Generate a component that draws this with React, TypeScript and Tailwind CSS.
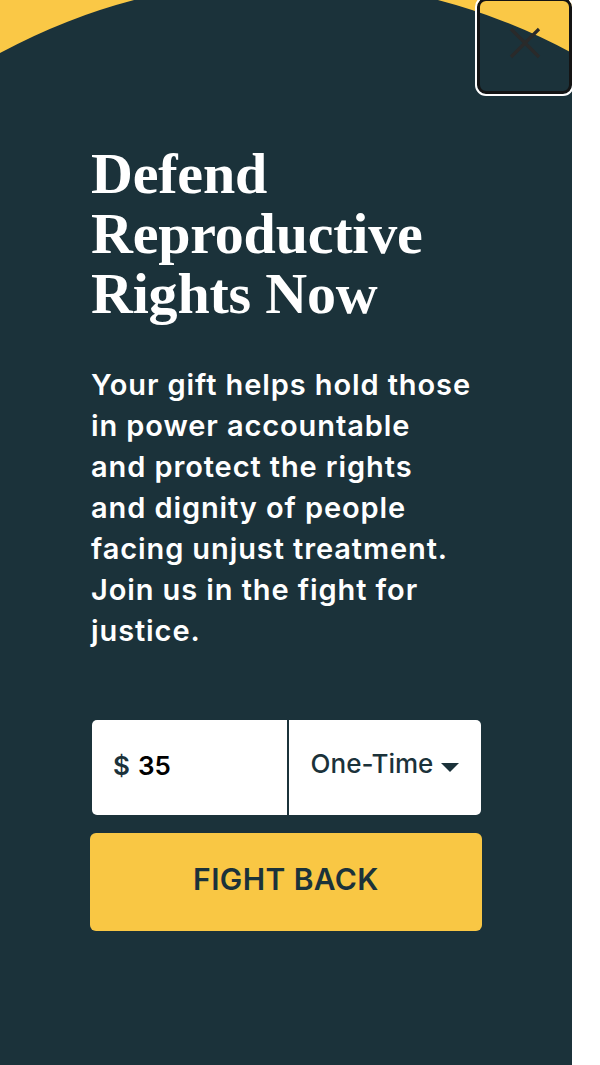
import React from "react";

const bodyLines = [
  "Your gift helps hold those",
  "in power accountable",
  "and protect the rights",
  "and dignity of people",
  "facing unjust treatment.",
  "Join us in the fight for",
  "justice.",
];

export default function App() {
  return (
    <div className="flex min-h-[1065px] w-[600px] bg-white">
      <div className="relative w-[572px] min-h-[1065px] overflow-hidden bg-[#1b323a]">
        <svg
          className="absolute left-0 top-0"
          width="572"
          height="60"
          viewBox="0 0 572 60"
          aria-hidden="true"
        >
          <path d="M0 0 H572 V53 A600 600 0 0 0 0 53 Z" fill="#fac846" />
        </svg>

        <button
          className="absolute right-0 top-[-2px] flex h-[96px] w-[95px] items-center justify-center rounded-[9px] border-[3px] border-[#141414] outline outline-2 outline-white"
          aria-label="Close"
        >
          <svg width="32" height="32" viewBox="0 0 32 32" className="mt-[-6px]">
            <path d="M2 2 L30 30 M30 2 L2 30" stroke="#2a2a2a" strokeWidth="3.2" />
          </svg>
        </button>

        <div className="relative flex flex-col pl-[91px] pt-[144px] w-[484px]">
          <h1
            className="text-[58px] leading-[60px] font-bold text-white tracking-[-0.2px]"
            style={{ fontFamily: '"Liberation Serif", "DejaVu Serif", serif' }}
          >
            Defend
            <br />
            Reproductive
            <br />
            Rights Now
          </h1>

          <p
            className="mt-[40px] text-[29px] leading-[41px] font-semibold text-white tracking-[0.9px] whitespace-nowrap"
            style={{ fontFamily: 'Inter, "Noto Sans", sans-serif' }}
          >
            {bodyLines.map((l, i) => (
              <React.Fragment key={i}>
                {l}
                {i < bodyLines.length - 1 && <br />}
              </React.Fragment>
            ))}
          </p>

          <div
            className="mt-[69px] flex h-[95px] w-[389px] ml-[1px]"
            style={{ fontFamily: 'Inter, "Noto Sans", sans-serif' }}
          >
            <div className="flex w-[195px] items-center gap-[8px] rounded-l-[5px] bg-white pb-[4px] pl-[21px] text-[26px] font-semibold">
              <span className="text-[#1b323a]">$</span>
              <span className="text-black">35</span>
            </div>
            <div className="w-[2px] bg-[#1b323a]" />
            <div className="flex flex-1 items-center justify-center gap-[8px] rounded-r-[5px] bg-white pb-[8px] text-[26px] font-medium text-[#1b323a]">
              <span>One-Time</span>
              <svg width="18" height="9" viewBox="0 0 18 9" className="mt-[8px]">
                <path d="M0 0 H18 L9 9 Z" fill="#1b323a" />
              </svg>
            </div>
          </div>

          <button
            className="mt-[18px] flex h-[98px] w-[392px] ml-[-1px] items-center justify-center rounded-[6px] bg-[#f9c744] pb-[6px] text-[30px] font-semibold text-[#1b323a] tracking-[0.4px]"
            style={{ fontFamily: 'Inter, "Noto Sans", sans-serif' }}
          >
            FIGHT BACK
          </button>
        </div>
      </div>
    </div>
  );
}
